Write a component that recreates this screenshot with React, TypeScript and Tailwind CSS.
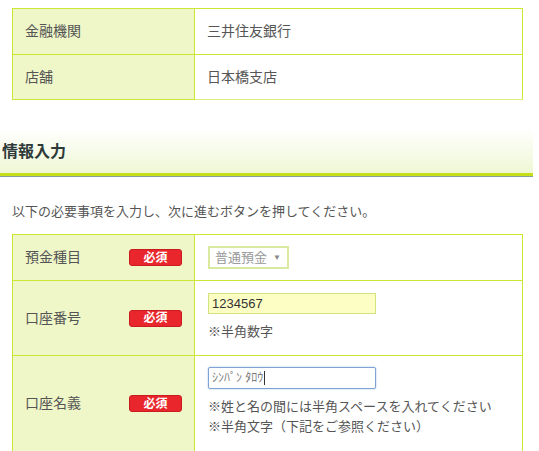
import React from 'react';

const jp = { fontFamily: '"Liberation Sans", "Noto Sans CJK JP", sans-serif' };

const Badge: React.FC = () => (
  <span className="inline-flex items-center justify-center w-[53px] h-[17px] rounded-[3px] bg-[#e8262b] border border-[#c81c20] text-white text-[12px] font-bold leading-none">
    必須
  </span>
);

const Label: React.FC<{ text: string; required?: boolean }> = ({ text, required }) => (
  <td className="w-[182px] bg-[#eff7c9] border border-[#cde634] px-3 align-middle">
    <div className="flex items-center justify-between">
      <span className="text-[14px] text-[#555]">{text}</span>
      {required && <Badge />}
    </div>
  </td>
);

export default function App() {
  return (
    <div className="w-[539px] h-[451px] overflow-hidden bg-white text-[#444]" style={jp}>
      <div className="pt-2 pl-3">
        <table className="w-[511px] border-collapse">
          <tbody>
            <tr className="h-[46px]">
              <Label text="金融機関" />
              <td className="border border-[#cde634] px-3 text-[14px] text-[#555]">三井住友銀行</td>
            </tr>
            <tr className="h-[45px]">
              <Label text="店舗" />
              <td className="border border-[#cde634] border-b-[#dcef7e] px-3 text-[14px] text-[#555]">日本橋支店</td>
            </tr>
          </tbody>
        </table>
      </div>

      <div className="mt-[28px] w-[533px]">
        <div className="h-[45px] bg-gradient-to-b from-white to-[#eff7d4] flex items-center pl-[2px] pt-[2px]">
          <h2 className="text-[16px] font-bold text-[#2e3a3a] leading-none">情報入力</h2>
        </div>
        <div className="h-[3px] bg-[#c6df1a]" />
        <div className="h-px bg-[#86a0a0]" />
      </div>

      <p className="pl-3 mt-[27px] text-[13px] text-[#555] leading-[16px]">
        以下の必要事項を入力し、次に進むボタンを押してください。
      </p>

      <div className="pl-3 mt-[14px]">
        <table className="w-[511px] border-collapse">
          <tbody>
            <tr className="h-[46px]">
              <Label text="預金種目" required />
              <td className="border border-[#cde634] px-[13px]">
                <div className="w-[81px] h-[23px] border-2 border-[#d9eaa0] flex items-center pl-[5px] gap-[6px] whitespace-nowrap text-[13px] text-[#999]">
                  <span>普通預金</span>
                  <span className="text-[8px] text-[#888]">▼</span>
                </div>
              </td>
            </tr>
            <tr className="h-[75px]">
              <Label text="口座番号" required />
              <td className="border border-[#cde634] px-[13px] align-top pt-[12px]">
                <div className="w-[168px] h-[21px] bg-[#fdfec4] border border-[#d1e37c] flex items-center px-[3px] text-[13px] text-[#333]" style={{ fontFamily: '"Liberation Sans", sans-serif' }}>
                  1234567
                </div>
                <div className="mt-[10px] text-[13px] text-[#555] leading-[16px]">※半角数字</div>
              </td>
            </tr>
            <tr className="h-[96px]">
              <Label text="口座名義" required />
              <td className="border border-[#cde634] px-[13px] align-top pt-[11px]">
                <div className="w-[168px] h-[22px] bg-white border border-[#7fa3d2] rounded-[2px] shadow-[0_0_2px_#9fc0e8] flex items-center px-[3px] text-[12px] text-[#777] whitespace-pre">
                  <span>ｼﾝﾊﾟﾝ ﾀﾛｳ</span>
                  <span className="w-px h-[14px] bg-[#333] ml-px" />
                </div>
                <div className="mt-[8px] text-[13px] text-[#555] leading-[20px]">
                  <div>※姓と名の間には半角スペースを入れてください</div>
                  <div>※半角文字（下記をご参照ください）</div>
                </div>
              </td>
            </tr>
          </tbody>
        </table>
      </div>
    </div>
  );
}
